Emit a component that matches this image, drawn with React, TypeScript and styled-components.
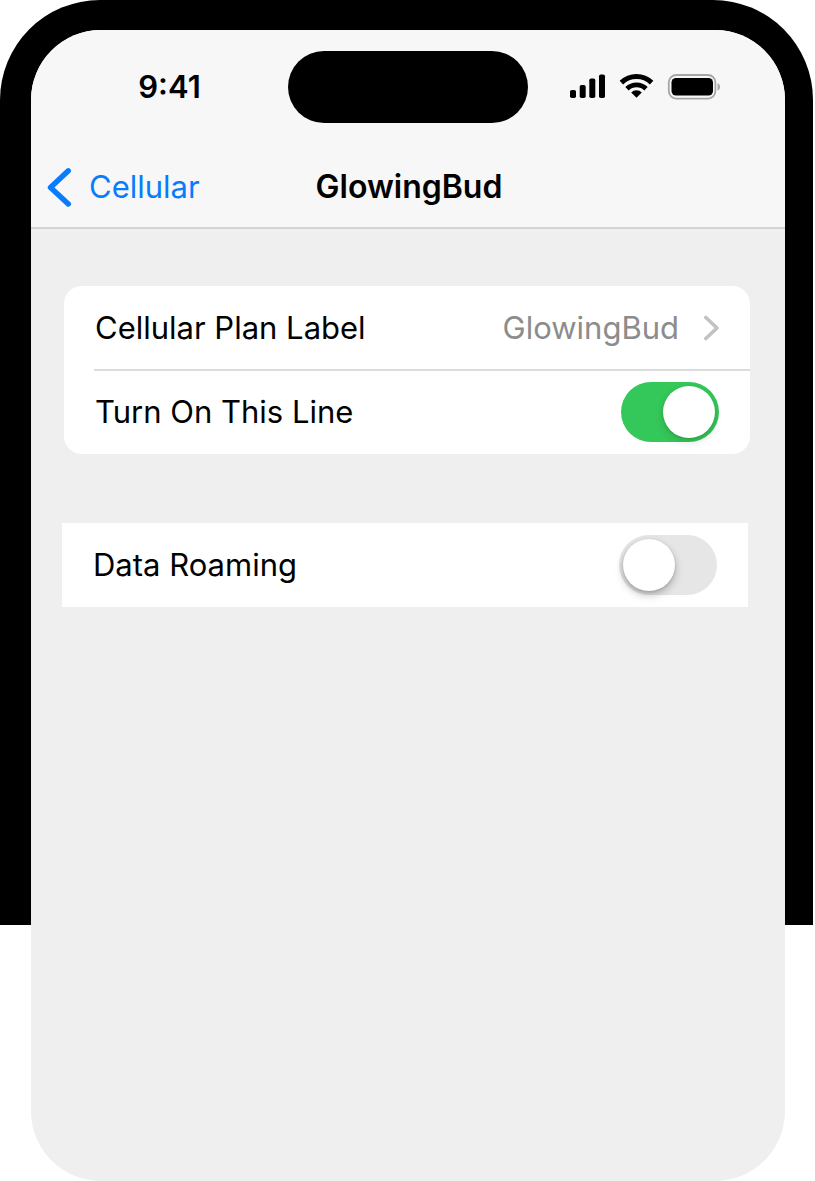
import React, { useState } from 'react';
import styled, { createGlobalStyle } from 'styled-components';

const GlobalStyle = createGlobalStyle`
  * { box-sizing: border-box; }
  body {
    margin: 0;
    background: #fff;
    color: #000;
    font-family: Inter, "Liberation Sans", sans-serif;
    font-size: 31px;
    line-height: 40px;
  }
`;

const Device = styled.div`
  display: flex;
  min-height: 100vh;
  margin-right: 2px;
  padding: 30px 28px 0 31px;
  border-radius: 100px 100px 0 0;
  background: linear-gradient(#000, #000) no-repeat 0 0 / 100% 925px;
`;

const Screen = styled.div`
  flex: 1;
  display: flex;
  flex-direction: column;
  background: #efefef;
  border-radius: 70px;
  overflow: hidden;
`;

const Header = styled.header`
  background: #f7f7f7;
  border-bottom: 2px solid #d4d4d4;
`;

const StatusBar = styled.div`
  display: grid;
  grid-template-columns: 1fr 240px 1fr;
  align-items: center;
  padding-top: 21px;
`;

const Time = styled.time`
  padding-left: 20px;
  text-align: center;
  font-weight: 600;
`;

const Island = styled.div`
  height: 72px;
  border-radius: 36px;
  background: #000;
`;

const StatusIcons = styled.div`
  display: flex;
  justify-content: center;
  padding-right: 24px;
`;

const NavBar = styled.nav`
  display: grid;
  grid-template-columns: 1fr auto 1fr;
  align-items: center;
  height: 80px;
  margin-top: 24px;
  padding: 0 13px 0 15px;
`;

const BackLink = styled.a`
  display: flex;
  align-items: center;
  gap: 17px;
  color: #087cfb;
  text-decoration: none;
`;

const Title = styled.h1`
  margin: 0;
  font-size: 32px;
  font-weight: 600;
  line-height: 40px;
`;

const Content = styled.main`
  display: flex;
  flex-direction: column;
  gap: 69px;
  padding: 57px 35px 80px 33px;
`;

const Card = styled.section<{ $square?: boolean }>`
  background: #fff;
  border-radius: ${(p) => (p.$square ? 0 : 18)}px;
  margin: ${(p) => (p.$square ? '0 2px 0 -2px' : '0')};
`;

const rowLayout = `
  display: flex;
  align-items: center;
  justify-content: space-between;
  width: 100%;
  height: 84px;
  padding: 0 31px;
`;

const LinkRow = styled.button`
  ${rowLayout}
  border: 0;
  background: none;
  color: inherit;
  font: inherit;
  text-align: left;
`;

const ToggleRow = styled.label`
  ${rowLayout}
`;

const Divider = styled.hr`
  height: 2px;
  margin: -1px 0 -1px 30px;
  border: 0;
  background: #dcdcdc;
`;

const RowValue = styled.span`
  display: flex;
  align-items: center;
  gap: 24px;
  color: #8c8c8c;
`;

const Switch = styled.input`
  appearance: none;
  flex: none;
  width: 98px;
  height: 60px;
  margin: 0;
  padding: 4px;
  border-radius: 30px;
  background: #e6e6e6;

  &::before {
    content: '';
    display: block;
    width: 52px;
    height: 52px;
    border-radius: 50%;
    background: #fff;
    box-shadow: 0 4px 8px rgba(0, 0, 0, 0.25), 0 1px 3px rgba(0, 0, 0, 0.15);
  }

  &:checked {
    background: #34c759;
  }

  &:checked::before {
    margin-left: auto;
    box-shadow: 0 4px 8px rgba(0, 0, 0, 0.12), 0 1px 3px rgba(0, 0, 0, 0.12);
  }
`;

const BackChevron = () => (
  <svg width="26" height="40" viewBox="0 0 26 40" fill="none" aria-hidden="true">
    <path d="M22.3 3.8 4.5 20.5 22.3 37" stroke="#087cfb" strokeWidth="5.4" strokeLinecap="round" strokeLinejoin="round" />
  </svg>
);

const RowChevron = () => (
  <svg width="16" height="26" viewBox="0 0 16 26" fill="none" aria-hidden="true">
    <path d="M2.8 2.5 14 13 2.8 23.5" stroke="#c2c2c2" strokeWidth="3.6" strokeLinecap="round" strokeLinejoin="round" />
  </svg>
);

const StatusGlyphs = () => (
  <svg width="152" height="28" viewBox="0 0 152 28" aria-hidden="true">
    <rect x="1" y="17" width="6" height="8" rx="1.8" />
    <rect x="10.7" y="12" width="6" height="13" rx="1.8" />
    <rect x="20.3" y="5.5" width="6" height="19.5" rx="1.8" />
    <rect x="30" y="1.5" width="6" height="23.5" rx="1.8" />
    <g fill="none" stroke="#000">
      <path d="M52.4 9.6a21.6 21.6 0 0 1 30.2 0" strokeWidth="5" />
      <path d="M58 15.8a13.6 13.6 0 0 1 19 0" strokeWidth="4.8" />
    </g>
    <path d="M62.2 19.4a7.4 7.4 0 0 1 10.6 0L67.5 24.8z" />
    <rect x="99.8" y="2" width="46.6" height="23.6" rx="7.5" fill="none" stroke="#a6a6a6" strokeWidth="1.8" />
    <rect x="102.5" y="5" width="41.5" height="17.6" rx="4.5" />
    <path d="M148.6 10.2c3.2 1 3.2 6.2 0 7.2z" fill="#a6a6a6" />
  </svg>
);

export default function App() {
  const [lineOn, setLineOn] = useState(true);
  const [roaming, setRoaming] = useState(false);

  return (
    <>
      <GlobalStyle />
      <Device>
        <Screen>
          <Header>
            <StatusBar>
              <Time>9:41</Time>
              <Island />
              <StatusIcons>
                <StatusGlyphs />
              </StatusIcons>
            </StatusBar>
            <NavBar>
              <BackLink href="#cellular">
                <BackChevron />
                Cellular
              </BackLink>
              <Title>GlowingBud</Title>
            </NavBar>
          </Header>
          <Content>
            <Card>
              <LinkRow type="button">
                Cellular Plan Label
                <RowValue>
                  GlowingBud
                  <RowChevron />
                </RowValue>
              </LinkRow>
              <Divider />
              <ToggleRow>
                Turn On This Line
                <Switch type="checkbox" role="switch" checked={lineOn} onChange={(e) => setLineOn(e.target.checked)} />
              </ToggleRow>
            </Card>
            <Card $square>
              <ToggleRow>
                Data Roaming
                <Switch type="checkbox" role="switch" checked={roaming} onChange={(e) => setRoaming(e.target.checked)} />
              </ToggleRow>
            </Card>
          </Content>
        </Screen>
      </Device>
    </>
  );
}
